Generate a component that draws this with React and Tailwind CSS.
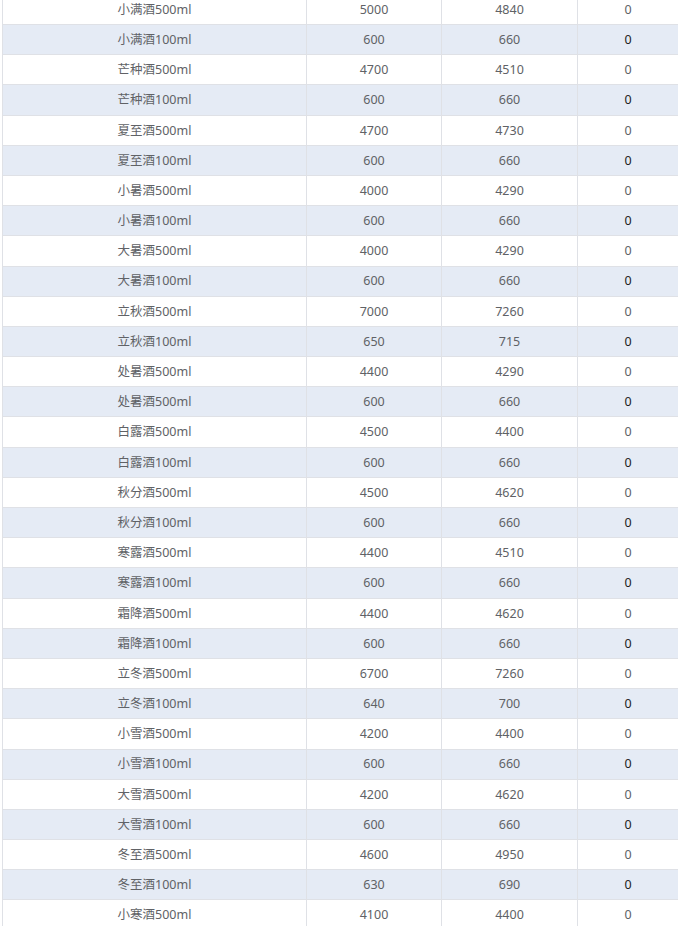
const rows = [
  ["小满酒500ml", "5000", "4840", "0"],
  ["小满酒100ml", "600", "660", "0"],
  ["芒种酒500ml", "4700", "4510", "0"],
  ["芒种酒100ml", "600", "660", "0"],
  ["夏至酒500ml", "4700", "4730", "0"],
  ["夏至酒100ml", "600", "660", "0"],
  ["小暑酒500ml", "4000", "4290", "0"],
  ["小暑酒100ml", "600", "660", "0"],
  ["大暑酒500ml", "4000", "4290", "0"],
  ["大暑酒100ml", "600", "660", "0"],
  ["立秋酒500ml", "7000", "7260", "0"],
  ["立秋酒100ml", "650", "715", "0"],
  ["处暑酒500ml", "4400", "4290", "0"],
  ["处暑酒500ml", "600", "660", "0"],
  ["白露酒500ml", "4500", "4400", "0"],
  ["白露酒100ml", "600", "660", "0"],
  ["秋分酒500ml", "4500", "4620", "0"],
  ["秋分酒100ml", "600", "660", "0"],
  ["寒露酒500ml", "4400", "4510", "0"],
  ["寒露酒100ml", "600", "660", "0"],
  ["霜降酒500ml", "4400", "4620", "0"],
  ["霜降酒100ml", "600", "660", "0"],
  ["立冬酒500ml", "6700", "7260", "0"],
  ["立冬酒100ml", "640", "700", "0"],
  ["小雪酒500ml", "4200", "4400", "0"],
  ["小雪酒100ml", "600", "660", "0"],
  ["大雪酒500ml", "4200", "4620", "0"],
  ["大雪酒100ml", "600", "660", "0"],
  ["冬至酒500ml", "4600", "4950", "0"],
  ["冬至酒100ml", "630", "690", "0"],
  ["小寒酒500ml", "4100", "4400", "0"],
];

export default function App() {
  return (
    <div
      className="w-[678px] h-[926px] overflow-hidden bg-white text-[12.5px] text-[#606266]"
      style={{ fontFamily: '"Noto Sans", "Noto Sans CJK SC", sans-serif' }}
    >
      <div className="-mt-[5.2px] ml-[2px] w-[676px] border-l border-[#dfe1e6]">
        {rows.map((r, i) => {
          const striped = i % 2 === 1;
          return (
            <div
              key={i}
              className={`flex h-[30.2px] pt-[1.5px] border-b border-[#dfe1e6] ${striped ? "bg-[#e5ebf5]" : "bg-white"}`}
            >
              <div className="w-[304px] flex items-center justify-center border-r border-[#dfe1e6] -mt-[1.5px] pt-[1.5px]">{r[0]}</div>
              <div className="w-[135px] flex items-center justify-center border-r border-[#dfe1e6] -mt-[1.5px] pt-[1.5px]">{r[1]}</div>
              <div className="w-[136px] flex items-center justify-center border-r border-[#dfe1e6] -mt-[1.5px] pt-[1.5px]">{r[2]}</div>
              <div className={`flex-1 flex items-center justify-center ${striped ? "text-[#222222]" : ""}`}>{r[3]}</div>
            </div>
          );
        })}
      </div>
    </div>
  );
}
